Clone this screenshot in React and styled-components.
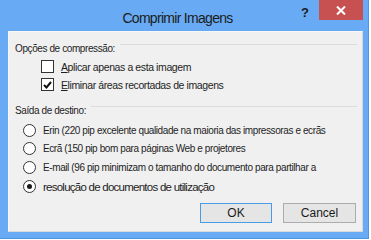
import React from "react";
import styled, { createGlobalStyle } from "styled-components";

const GlobalStyle = createGlobalStyle`
  html, body {
    margin: 0;
    padding: 0;
    background: #ffffff;
  }
  body {
    font-family: "Liberation Sans", Arial, sans-serif;
  }
`;

const Window = styled.div`
  box-sizing: border-box;
  width: 369px;
  height: 239px;
  background: #68abf4;
  border-right: 1px solid #4f94e0;
  border-bottom: 1px solid #4f94e0;
  display: flex;
  flex-direction: column;
  padding: 0 5px 6px 8px;
`;

const TitleBar = styled.div`
  height: 31px;
  display: flex;
  align-items: flex-start;
  margin-left: -8px;
  margin-right: -5px;
`;

const Title = styled.div`
  flex: 1;
  text-align: center;
  font-size: 14px;
  letter-spacing: -0.7px;
  color: #1b1b1b;
  padding-top: 10px;
  padding-left: 54px;
`;

const Help = styled.span`
  font-size: 13px;
  font-weight: bold;
  color: #1b1b1b;
  padding-top: 5px;
  margin-right: 10px;
`;

const CloseButton = styled.div`
  width: 44px;
  height: 20px;
  background: #c75050;
  display: flex;
  align-items: center;
  justify-content: center;
  margin-right: 5px;
`;

const Content = styled.div`
  flex: 1;
  background: #f0f0f0;
  border: 1px solid #d9d9d9;
  border-top-color: #f7f7f7;
  border-left-color: #f7f7f7;
  display: flex;
  flex-direction: column;
  padding: 0 5px 0 6px;
  font-size: 10px;
  letter-spacing: -0.4px;
  color: #1e1e1e;
`;

const GroupHeader = styled.div`
  display: flex;
  align-items: center;
  height: 14px;
  margin-top: ${(p) => p.top}px;
  & span {
    white-space: nowrap;
  }
  &::after {
    content: "";
    flex: 1;
    align-self: flex-start;
    height: 1px;
    background: #dcdcdc;
    margin: 3px 0 0 5px;
  }
`;

const OptionRow = styled.label`
  display: flex;
  align-items: center;
  gap: 7px;
  height: 13px;
  margin-top: ${(p) => p.top}px;
  margin-left: ${(p) => p.indent}px;
  font-size: ${(p) => p.size}px;
  letter-spacing: ${(p) => p.spacing}px;
  white-space: nowrap;
`;

const Box = styled.span`
  box-sizing: border-box;
  width: 13px;
  height: 13px;
  border: 1px solid #333333;
  background: #ffffff;
  display: flex;
  align-items: center;
  justify-content: center;
  flex-shrink: 0;
`;

const Radio = styled(Box)`
  border-radius: 50%;
  &::after {
    content: "";
    display: ${(p) => (p.checked ? "block" : "none")};
    width: 5px;
    height: 5px;
    border-radius: 50%;
    background: #1a1a1a;
  }
`;

const Buttons = styled.div`
  display: flex;
  justify-content: flex-end;
  gap: 11px;
  margin-top: auto;
  margin-bottom: 8px;
  margin-right: 1px;
`;

const Button = styled.div`
  box-sizing: border-box;
  width: ${(p) => p.w}px;
  height: 20px;
  display: flex;
  align-items: center;
  justify-content: center;
  font-size: 12px;
  letter-spacing: 0;
  color: #1a1a1a;
  background: #e5e5e5;
  border: 1px solid ${(p) => (p.primary ? "#4a9be6" : "#acacac")};
`;

const CheckMark = () => (
  <svg width="9" height="8" viewBox="0 0 9 8">
    <path d="M1 4 L3.5 6.5 L8 1" fill="none" stroke="#111" strokeWidth="2" />
  </svg>
);

const Check = ({ checked }) => <Box>{checked && <CheckMark />}</Box>;

const radios = [
  { label: "Erin (220 pip excelente qualidade na maioria das impressoras e ecrãs", top: 7 },
  { label: "Ecrã (150 pip bom para páginas Web e projetores", top: 5 },
  { label: "E-mail (96 pip minimizam o tamanho do documento para partilhar a", top: 6 },
  {
    label: "resolução de documentos de utilização",
    top: 6,
    checked: true,
    size: 11.5,
    spacing: -0.75,
  },
];

const App = () => (
  <>
    <GlobalStyle />
    <Window>
      <TitleBar>
        <Title>Comprimir Imagens</Title>
        <Help>?</Help>
        <CloseButton>
          <svg width="10" height="9" viewBox="0 0 10 9">
            <path d="M1 0.5 L9 8.5 M9 0.5 L1 8.5" stroke="#fff" strokeWidth="2" />
          </svg>
        </CloseButton>
      </TitleBar>
      <Content>
        <GroupHeader top={9}>
          <span>Opções de compressão:</span>
        </GroupHeader>
        <OptionRow top={5} indent={26} size={10.5} spacing={-0.4}>
          <Check />
          <span>
            <u>A</u>plicar apenas a esta imagem
          </span>
        </OptionRow>
        <OptionRow top={5} indent={26} size={10.5} spacing={-0.4}>
          <Check checked />
          <span>
            <u>E</u>liminar áreas recortadas de imagens
          </span>
        </OptionRow>
        <GroupHeader top={12}>
          <span>Saída de destino:</span>
        </GroupHeader>
        {radios.map((r) => (
          <OptionRow
            key={r.label}
            top={r.top}
            indent={8}
            size={r.size || 10}
            spacing={r.spacing ?? -0.4}
          >
            <Radio checked={r.checked} />
            <span>{r.label}</span>
          </OptionRow>
        ))}
        <Buttons>
          <Button w={72} primary>
            OK
          </Button>
          <Button w={73}>Cancel</Button>
        </Buttons>
      </Content>
    </Window>
  </>
);

export default App;
